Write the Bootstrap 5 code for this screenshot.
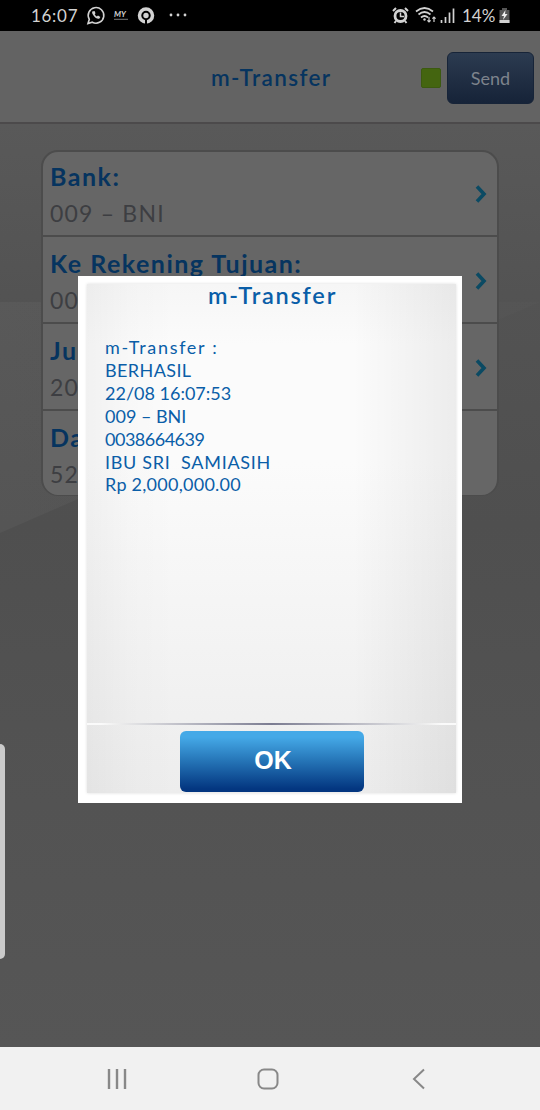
<!DOCTYPE html>
<html lang="id">
<head>
<meta charset="utf-8">
<meta name="viewport" content="width=device-width, initial-scale=1">
<title>m-Transfer</title>
<link href="https://cdn.jsdelivr.net/npm/bootstrap@5.3.0/dist/css/bootstrap.min.css" rel="stylesheet">
<style>
body{height:1110px;overflow:hidden;background:#525252;font-family:Lato,"Open Sans",sans-serif;white-space:nowrap}
.statusbar{height:31px;color:#d2d2d2;font-size:17px;line-height:31px;padding-left:31px;padding-right:30px}
.statusbar svg{display:block}
.clock{width:47px;letter-spacing:.7px}
.charge{width:33px}
.appbar{height:93px;background:#636363;border-bottom:2px solid #4c4a4b;display:grid;grid-template-columns:1fr 124px 1fr;align-items:center;padding:3px 6px 0 0}
.title1{color:#06345f;font-size:22.5px;font-weight:600;text-align:center;letter-spacing:1.4px;padding-left:6px}
.led{width:20px;height:20px;border-radius:2px;background:#446510;margin-right:6px;border:1px solid #3c5a10}
.send{width:87px;height:52px;border-radius:6px;border:1px solid #172438;background:linear-gradient(#2c3b50,#162338);color:#7d838c;font-size:18px;padding:0}
.stage{height:923px;background:linear-gradient(#595959 0,#535353 170px,#4f4f4f 400px,#525252 600px,#565656 100%);padding:26px 41px 0 41px;position:relative}
.backdrop-art{position:absolute;left:0;top:0}
.fields{position:relative;height:346px;border:2px solid #4c4c4c;border-bottom-width:1px;border-radius:17px;background:#666;overflow:hidden}
.field{height:87px;padding:11px 10px 0 7px;border-bottom:2px solid #4c4c4c}
.field:first-child{height:85px;padding-top:9px}
.field:last-child{border:0}
.field b{display:block;font-size:25px;line-height:31px;color:#06345f;font-weight:700;letter-spacing:1.5px}
.field span{display:block;font-size:23px;line-height:30px;margin-top:6px;color:#3d3e42;letter-spacing:1.2px}
.dialogbox{position:absolute;left:78px;top:276px;width:384px;height:527px;background:#fff;padding:8px 6px 10px 9px}
.panel{height:509px;box-shadow:0 0 3px #ddd;background:linear-gradient(90deg,rgba(0,0,0,.04),rgba(0,0,0,.01) 12%,rgba(0,0,0,0) 24% 72%,rgba(0,0,0,.06)),linear-gradient(#f6f6f6,#fbfbfb 12% 35%,#f0f0f0 85%,#ededed)}
.title2{color:#0a5ea8;font-size:23.5px;line-height:22px;font-weight:600;text-align:center;height:53px;letter-spacing:1.8px;padding-left:2px}
.receipt{color:#0a5ea8;font-size:18px;line-height:22.9px;height:386px;padding-left:18px;white-space:pre;position:relative;top:-1px}
.receipt div:nth-child(1){letter-spacing:1.7px}
.receipt div:nth-child(2){letter-spacing:.4px}
.receipt div:nth-child(5){letter-spacing:-.5px}
.receipt div:nth-child(6){letter-spacing:.7px}
.receipt div:nth-child(7){letter-spacing:.25px}
.rule{height:2px;background:linear-gradient(90deg,#fafafa 0 4%,#eee 8%,#7b7c91 50%,#eee 92%,#fafafa 96%)}
.ok{display:block;width:184px;height:61px;margin:6px 0 0 93px;border:0;border-radius:6px;background:linear-gradient(#45a9e7 10%,#2676b8 48%,#033680 95%);color:#fff;font:bold 25px/58px "Liberation Sans",sans-serif;padding:0 0 3px 2px}
.edge{position:absolute;left:0;top:744px;width:5px;height:215px;border-radius:0 5px 5px 0;background:#cbcbcb}
.softkeys{height:63px;background:#f1f1f1;display:grid;grid-template-columns:236px 64px 238px;place-items:center}
</style>
</head>
<body>
<header class="statusbar bg-black d-flex align-items-center">
 <span class="clock">16:07</span>
 <svg width="112" height="31" class="ms-2" viewBox="86 0 112 31" fill="none" stroke="#d2d2d2"><path d="M88 23.500l1.300-4.200a7.800 7.800 0 1 1 3 2.900z" stroke-width="1.600"/><path d="M92.200 11.500c-1 2 3.600 8.200 7 7.200l1.200-1.700-2.400-1.400-1.200 1c-1-.5-1.700-1.300-2.100-2.300l.8-1-.9-2.300z" fill="#d2d2d2" stroke="none"/><text x="114" y="17" font-size="8" font-weight="bold" font-style="italic" fill="#d2d2d2" stroke="none">MY</text><path d="M114 19.300h14" stroke="#777"/><circle cx="146" cy="15.500" r="6.500" stroke-width="3.500"/><circle cx="146" cy="15.500" r="2.700" fill="#d2d2d2" stroke="none"/><path d="M146 19v6" stroke="#000" stroke-width="2"/><g fill="#d2d2d2" stroke="none"><circle cx="171" cy="15" r="1.400"/><circle cx="178" cy="15" r="1.400"/><circle cx="185" cy="15" r="1.400"/></g></svg>
 <svg class="ms-auto" width="66" height="31" viewBox="392 0 66 31" fill="none" stroke="#d2d2d2"><circle cx="400.500" cy="16" r="5.500" stroke-width="2.800" fill="#000"/><path d="M393 11l3-3M408 11l-3-3M396 21l-1.500 2M405 21l1.500 2" stroke-width="2"/><path d="M400.500 12.500v4h3.500" stroke-width="1.500"/><path d="M416 11.500q8.500-7 17 0M418.500 14.500q6-5 12 0M421 17.500q3.500-3 7 0" stroke-width="1.700"/><circle cx="424.500" cy="19.500" r="1.200" fill="#d2d2d2" stroke="none"/><path d="M429 17v5m-1.600-1.600l1.600 1.600 1.600-1.600M434 22v-5m-1.600 1.600l1.600-1.600 1.600 1.600" stroke-width="1.200"/><path d="M441.500 20v3M445.500 17v6M449.500 12.500V23M453.500 8.500V23" stroke-width="1.700"/></svg>
 <span class="charge ms-1">14%</span>
 <svg class="ms-1" width="11" height="31" viewBox="497 0 11 31"><path d="M500 8h5v2h2.500v13h-10V10h2.500z" fill="#555"/><path d="M497.500 20h10v3h-10z" fill="#d2d2d2"/><path d="M503.500 10l-4 6h2.500l-1 4 4.500-6h-2.500z" fill="#eee"/></svg>
</header>
<nav class="appbar">
 <span></span><span class="title1">m-Transfer</span>
 <div class="d-flex align-items-center justify-content-end"><i class="led"></i><button class="btn send">Send</button></div>
</nav>
<main class="stage">
 <svg class="backdrop-art" width="540" height="923"><defs><linearGradient id="beam"><stop stop-color="#fff" stop-opacity=".035"/><stop offset="1" stop-color="#fff" stop-opacity=".01"/></linearGradient></defs><path d="M0 178h540L78 375 0 409z" fill="url(#beam)"/></svg>
 <section class="fields">
  <div class="field d-flex justify-content-between"><div><b>Bank:</b><span>009 – BNI</span></div><svg class="mt-4" width="12" height="18"><path d="M2 1.500l7 7.500-7 7.500" fill="none" stroke="#0b4a63" stroke-width="3.600"/></svg></div>
  <div class="field d-flex justify-content-between"><div><b>Ke Rekening Tujuan:</b><span>00</span></div><svg class="mt-4" width="12" height="18"><path d="M2 1.500l7 7.500-7 7.500" fill="none" stroke="#0b4a63" stroke-width="3.600"/></svg></div>
  <div class="field d-flex justify-content-between"><div><b>Ju</b><span>20</span></div><svg class="mt-4" width="12" height="18"><path d="M2 1.500l7 7.500-7 7.500" fill="none" stroke="#0b4a63" stroke-width="3.600"/></svg></div>
  <div class="field"><b>Da</b><span>52</span></div>
 </section>
</main>
<footer class="softkeys"><svg width="22" height="22"><path d="M2 1v20M10 1v20M18 1v20" stroke="#888" stroke-width="2.400"/></svg><svg width="22" height="22"><rect x="1.500" y="1.500" width="19" height="19" rx="5.500" fill="none" stroke="#888" stroke-width="2"/></svg><svg width="14" height="22"><path d="M12 1.500L2 11l10 9.500" fill="none" stroke="#888" stroke-width="2"/></svg></footer>
<section class="dialogbox"><div class="panel">
 <div class="title2">m-Transfer</div>
 <div class="receipt"><div>m-Transfer :</div><div>BERHASIL</div><div>22/08 16:07:53</div><div>009 – BNI</div><div>0038664639</div><div>IBU SRI  SAMIASIH</div><div>Rp 2,000,000.00</div></div>
 <div class="rule"></div><button class="ok">OK</button>
</div></section>
<div class="edge"></div>
<script src="https://cdn.jsdelivr.net/npm/bootstrap@5.3.0/dist/js/bootstrap.bundle.min.js"></script>
</body>
</html>
